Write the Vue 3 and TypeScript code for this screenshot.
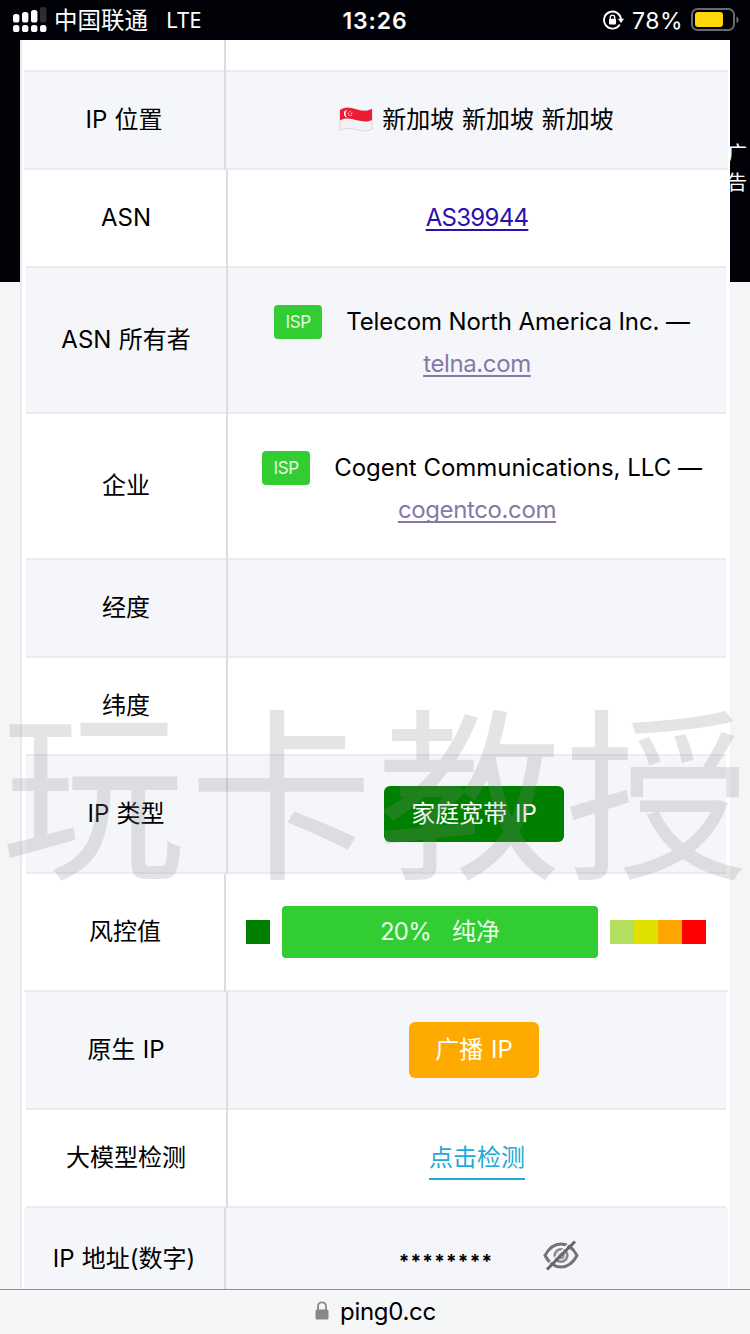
<script setup lang="ts">
interface Row {
  label: string
  kind: 'blank' | 'flag' | 'asn' | 'org' | 'type' | 'risk' | 'native' | 'check' | 'digits'
  height: number
  shade?: boolean
  wide?: boolean
  name?: string
  site?: string
  fit?: string
}

const rows: Row[] = [
  { label: '', kind: 'blank', height: 32, wide: true },
  { label: 'IP 位置', kind: 'flag', height: 98, shade: true, wide: true },
  { label: 'ASN', kind: 'asn', height: 98 },
  { label: 'ASN 所有者', kind: 'org', height: 146, shade: true, name: 'Telecom North America Inc. —', site: 'telna.com', fit: 'first' },
  { label: '企业', kind: 'org', height: 146, name: 'Cogent Communications, LLC —', site: 'cogentco.com', fit: 'second' },
  { label: '经度', kind: 'blank', height: 98, shade: true },
  { label: '纬度', kind: 'blank', height: 98 },
  { label: 'IP 类型', kind: 'type', height: 118, shade: true },
  { label: '风控值', kind: 'risk', height: 118, wide: true },
  { label: '原生 IP', kind: 'native', height: 118, shade: true },
  { label: '大模型检测', kind: 'check', height: 98 },
  { label: 'IP 地址(数字)', kind: 'digits', height: 104, shade: true, wide: true },
]
const scale: string[] = ['#b2df5f', '#dfdf00', '#ffa500', '#ff0000']
</script>

<template>
  <div class="screen">
    <header class="status">
      <div class="carrier">
        <svg class="signal" width="34" height="26" viewBox="0 0 34 26">
          <g fill="#fff">
            <rect x="0" y="7" width="6.4" height="8.5" rx="2.6" />
            <rect x="9" y="5" width="6.4" height="10.5" rx="2.6" />
            <rect x="18" y="3" width="6.4" height="12.5" rx="2.6" />
            <rect x="27" y="0" width="6.4" height="15.5" rx="2.6" fill="#2d2e33" />
            <rect x="0" y="18" width="6.4" height="7" rx="2.6" />
            <rect x="9" y="18" width="6.4" height="7" rx="2.6" />
            <rect x="18" y="18" width="6.4" height="7" rx="2.6" />
            <rect x="27" y="18" width="6.4" height="7" rx="2.6" />
          </g>
        </svg>
        <span class="operator">中国联通</span>
        <span class="network">LTE</span>
      </div>
      <div class="clock">13:26</div>
      <div class="power">
        <svg class="rotation" width="22" height="20" viewBox="0 0 22 20">
          <path d="M16.800 14.500A8.500 8.500 0 1 1 18 9.500" fill="none" stroke="#fff" stroke-width="1.9" />
          <path d="M14.900 8.800h6.200l-3.100 4.200z" fill="#fff" />
          <rect x="6" y="8.800" width="7" height="5.800" rx="1" fill="#fff" />
          <path d="M7.300 9.500V7.300a2.200 2.200 0 0 1 4.400 0V9.500" fill="none" stroke="#fff" stroke-width="1.300" />
        </svg>
        <span class="percent">78%</span>
        <svg class="battery" width="48" height="24" viewBox="0 0 48 24">
          <rect x="1" y="1" width="42" height="21" rx="5.5" fill="none" stroke="#69696c" stroke-width="2" />
          <rect x="4" y="4" width="28" height="15" rx="3" fill="#ffd60a" />
          <path d="M45.5 8.5c2.6 1 2.6 5.600 0 6.600z" fill="#77777a" />
        </svg>
      </div>
    </header>

    <main class="page">
      <div class="banner"><span class="ad">广<br />告</span></div>
      <section class="card">
        <div
          v-for="(row, i) in rows"
          :key="i"
          class="row"
          :class="[row.kind, { shade: row.shade, wide: row.wide }]"
          :style="{ height: row.height + 'px' }"
        >
          <div class="label" :class="{ latin: row.kind === 'asn' }">{{ row.label }}</div>
          <div class="value">
            <template v-if="row.kind === 'flag'">
              <svg class="sg" width="34" height="26" viewBox="0 0 34 26">
                <path d="M1 3C7-1 13 1 18 2.500s10 2 15-.5v20c-5 3-10 2-15 .8S7 20 1 23.500z" fill="#f3f3f3" stroke="#cfcfd2" stroke-width=".8" />
                <path d="M1 3C7-1 13 1 18 2.500s10 2 15-.5v11c-5 2.400-10 1.500-15 .3S7 10 1 13.500z" fill="#ec1c33" />
                <path d="M8.500 3a3.600 3.600 0 1 0 0 7.200 4.200 4.200 0 0 1 0-7.200" fill="#fff" />
                <g fill="#fff" opacity=".85">
                  <circle cx="11" cy="4.600" r=".7" /><circle cx="9.300" cy="6.200" r=".7" /><circle cx="12.800" cy="6.200" r=".7" /><circle cx="10" cy="8.300" r=".7" /><circle cx="12.200" cy="8.300" r=".7" />
                </g>
              </svg>
              <span class="place">新加坡 新加坡 新加坡</span>
            </template>
            <a v-else-if="row.kind === 'asn'" class="asn-link">AS39944</a>
            <template v-else-if="row.kind === 'org'">
              <div class="owner"><span class="isp">ISP</span><span class="name" :class="row.fit">{{ row.name }}</span></div>
              <a class="site" :class="row.fit">{{ row.site }}</a>
            </template>
            <span v-else-if="row.kind === 'type'" class="tag home">家庭宽带 IP</span>
            <template v-else-if="row.kind === 'risk'">
              <i class="safe"></i>
              <span class="meter"><span class="score">20%</span><span class="grade">纯净</span></span>
              <span class="scale"><i v-for="c in scale" :key="c" :style="{ background: c }"></i></span>
            </template>
            <span v-else-if="row.kind === 'native'" class="tag cast">广播 IP</span>
            <a v-else-if="row.kind === 'check'" class="check-link">点击检测</a>
            <template v-else-if="row.kind === 'digits'">
              <span class="mask">********</span>
              <svg class="eye" width="36" height="32" viewBox="0 0 36 32" fill="none" stroke="#737478">
                <path d="M2 15.500C6 8 12 4 18 4s12 4 16 11.500C30 23 24 27 18 27S6 23 2 15.500z" stroke-width="3" />
                <circle cx="18" cy="15.500" r="6.300" stroke-width="2.600" stroke="#87888c" />
                <circle cx="18" cy="15.500" r="2.700" stroke-width="2.200" stroke="#96979b" />
                <path d="M2.500 27L28 1.500" stroke="#f5f6fa" stroke-width="1.500" />
                <path d="M4 29.500L32 1.500" stroke-width="3" stroke="#66676b" />
              </svg>
            </template>
          </div>
        </div>
      </section>
    </main>

    <footer class="address">
      <svg width="14" height="20" viewBox="0 0 14 20">
        <path d="M3 9V5.300a4 4 0 0 1 8 0V9" fill="none" stroke="#88888b" stroke-width="1.800" />
        <rect x=".5" y="8.500" width="13" height="10" rx="1.500" fill="#88888b" />
      </svg>
      <span>ping0.cc</span>
    </footer>
    <div class="watermark">玩卡教授</div>
  </div>
</template>

<style>
html,
body {
  margin: 0;
  overflow: hidden;
}
</style>

<style scoped>
.screen {
  position: relative;
  width: 750px;
  height: 1334px;
  overflow: hidden;
  display: flex;
  flex-direction: column;
  background: #f4f5f7;
  color: #000;
  font-family: Inter, "Noto Sans CJK SC", sans-serif;
  font-size: 24px;
  box-sizing: border-box;
}
.status {
  flex: none;
  height: 40px;
  display: grid;
  grid-template-columns: 1fr auto 1fr;
  align-items: center;
  background: #000208;
  color: #fff;
}
.carrier {
  display: flex;
  align-items: center;
  padding-left: 13px;
}
.signal { margin-right: 7px; }
.operator { font-size: 23.500px; line-height: 38px; padding-top: 2px; }
.network { margin-left: 18px; font-family: "Noto Sans", sans-serif; font-size: 22px; line-height: 38px; padding-bottom: 2px; }
.clock { font-size: 23px; font-weight: 600; letter-spacing: 0.900px; padding-top: 1px; }
.power {
  display: flex;
  align-items: center;
  justify-content: flex-end;
  padding-right: 11px;
}
.rotation { margin-right: 7px; }
.percent { font-size: 23px; letter-spacing: 0.500px; margin-right: 8px; padding-top: 2px; }
.page {
  position: relative;
  flex: none;
  height: 1249px;
  overflow: hidden;
}
.banner {
  position: absolute;
  inset: 0 0 auto;
  height: 242px;
  background: #000208;
}
.ad {
  position: absolute;
  left: 727px;
  top: 100px;
  width: 20px;
  color: #fff;
  font-size: 20px;
  line-height: 29px;
}
.card {
  position: relative;
  width: 710px;
  height: 1249px;
  margin-left: 20px;
  box-sizing: border-box;
  border-left: 2px solid #ebebed;
  background: #fff;
}
.row {
  display: grid;
  grid-template-columns: 200px 2px 1fr;
  margin: 0 4px;
  box-sizing: border-box;
  border-bottom: 2px solid #ececee;
}
.row.wide { margin: 0 2px; }
.row::before {
  content: "";
  grid-column: 2;
  grid-row: 1;
  background: #dddde0;
  margin-bottom: -2px;
}
.shade { background: #f5f6fa; }
.label {
  grid-column: 1;
  grid-row: 1;
  display: flex;
  align-items: center;
  justify-content: center;
  padding-bottom: 5px;
  word-spacing: 0.500px;
  white-space: pre;
}
.label.latin { padding-bottom: 1px; }
.value {
  grid-column: 3;
  grid-row: 1;
  display: flex;
  align-items: center;
  justify-content: center;
  white-space: pre;
  min-width: 0;
}
.sg { margin-right: 9px; }
.place { padding-bottom: 5px; word-spacing: 1px; }
.flag .value { padding-right: 1px; }
.asn-link {
  color: #2a10b0;
  letter-spacing: -0.700px;
  padding-bottom: 1px;
  text-decoration: underline;
  text-decoration-thickness: 2px;
  text-underline-offset: 3px;
}
.org .value { flex-direction: column; padding-top: 5px; }
.owner { display: flex; align-items: center; height: 42px; margin-left: 10px; }
.isp {
  width: 48px;
  height: 34px;
  margin-right: 24px;
  border-radius: 4px;
  background: #32cd32;
  color: #e6fae6;
  font-size: 17px;
  line-height: 34px;
  letter-spacing: -0.300px;
  text-align: center;
}
.name.first { letter-spacing: -0.120px; }
.name.second { letter-spacing: -0.020px; }
.site {
  height: 42px;
  line-height: 42px;
  color: #8679a8;
  letter-spacing: -0.380px;
  text-decoration: underline;
  text-decoration-thickness: 2px;
  text-underline-offset: 3px;
  text-decoration-skip-ink: none;
}
.tag {
  height: 56px;
  line-height: 56px;
  border-radius: 6px;
  color: #fff;
  text-align: center;
  word-spacing: 1px;
  margin-right: 6px;
}
.home { width: 180px; background: #008000; }
.cast { width: 130px; background: #ffaa00; }
.risk .value { padding-right: 2px; }
.risk .label { padding-left: 2px; }
.safe { width: 24px; height: 24px; background: #008000; }
.meter {
  width: 316px;
  height: 52px;
  margin: 0 12px;
  display: flex;
  align-items: center;
  justify-content: center;
  gap: 21px;
  border-radius: 4px;
  background: #32cd32;
  color: #e8fbe8;
}
.score { letter-spacing: -0.800px; padding-bottom: 1px; }
.grade { padding-bottom: 5px; }
.scale { display: flex; }
.scale i { width: 24px; height: 24px; }
.check-link {
  color: #1fabd5;
  height: 43px;
  line-height: 42px;
  margin-top: 1px;
  border-bottom: 2px solid #1fabd5;
  box-sizing: border-box;
}
.digits .value { padding-left: 24px; padding-bottom: 6px; }
.mask { font-size: 19px; font-weight: 700; letter-spacing: 1.200px; padding-top: 10px; }
.eye { margin-left: 50px; }
.address {
  flex: none;
  height: 45px;
  box-sizing: border-box;
  border-top: 1px solid #8f9092;
  display: flex;
  align-items: center;
  justify-content: center;
  gap: 11px;
  padding-bottom: 2px;
  padding-left: 1px;
  letter-spacing: -0.300px;
  background: #f5f6f8;
}
.watermark {
  position: absolute;
  left: 1px;
  top: 645px;
  font-family: "Noto Sans CJK SC", sans-serif;
  font-size: 184px;
  font-weight: 400;
  letter-spacing: 4px;
  line-height: 280px;
  white-space: nowrap;
  color: #888;
  opacity: 0.22;
  pointer-events: none;
}
</style>
